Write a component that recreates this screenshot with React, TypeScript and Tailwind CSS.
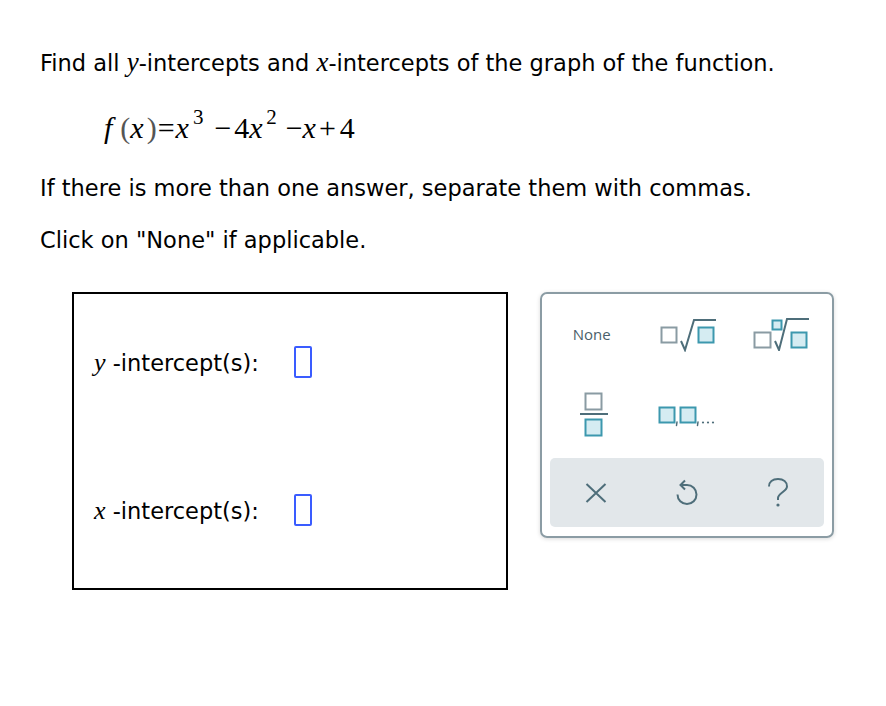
import React from "react";

const GRAY = "#8a9ba3";
const TEAL = "#3c98ae";
const TEAL_FILL = "#d5ecf2";
const INK = "#4e6e7a";

function SqrtIcon() {
  return (
    <svg width="58" height="34" viewBox="0 0 58 34">
      <rect x="1.5" y="9.5" width="15" height="15" fill="white" stroke={GRAY} strokeWidth="2" />
      <path d="M21 23 L25 32 L34 2 L56 2" fill="none" stroke={INK} strokeWidth="2" />
      <rect x="38.5" y="9.5" width="15" height="15" fill={TEAL_FILL} stroke={TEAL} strokeWidth="2" />
    </svg>
  );
}

function NthRootIcon() {
  return (
    <svg width="58" height="34" viewBox="0 0 58 34">
      <rect x="1.5" y="15.5" width="16" height="15" fill="white" stroke={GRAY} strokeWidth="2" />
      <rect x="19.5" y="3.5" width="9" height="9" fill={TEAL_FILL} stroke={TEAL} strokeWidth="2" />
      <path d="M22 24 L26 33 L34 2 L56 2" fill="none" stroke={INK} strokeWidth="2" />
      <rect x="38.5" y="15.5" width="15" height="15" fill={TEAL_FILL} stroke={TEAL} strokeWidth="2" />
    </svg>
  );
}

function FractionIcon() {
  return (
    <svg width="30" height="47" viewBox="0 0 30 47">
      <rect x="6.5" y="2.5" width="16" height="16" fill="white" stroke={GRAY} strokeWidth="2" />
      <path d="M1 23 L29 23" stroke={INK} strokeWidth="2" />
      <rect x="6.5" y="28.5" width="16" height="16" fill={TEAL_FILL} stroke={TEAL} strokeWidth="2" />
    </svg>
  );
}

function ListIcon() {
  return (
    <svg width="60" height="24" viewBox="0 0 60 24">
      <rect x="1.5" y="3.5" width="15" height="15" fill={TEAL_FILL} stroke={TEAL} strokeWidth="2" />
      <path d="M19 18 L18.5 21.5" stroke={INK} strokeWidth="1.5" strokeLinecap="round" />
      <rect x="22.5" y="3.5" width="15" height="15" fill={TEAL_FILL} stroke={TEAL} strokeWidth="2" />
      <path d="M40 18 L39.5 21.5" stroke={INK} strokeWidth="1.5" strokeLinecap="round" />
      <circle cx="45" cy="18.5" r="1.1" fill={INK} />
      <circle cx="50" cy="18.5" r="1.1" fill={INK} />
      <circle cx="55" cy="18.5" r="1.1" fill={INK} />
    </svg>
  );
}

function CloseIcon() {
  return (
    <svg width="22" height="20" viewBox="0 0 22 20">
      <path d="M1.5 1 L20.5 19 M20.5 1 L1.5 19" stroke={INK} strokeWidth="2" />
    </svg>
  );
}

function UndoIcon() {
  return (
    <svg width="24" height="28" viewBox="0 0 24 28">
      <path d="M7 6 L12 6 A9.5 9.5 0 1 1 2.5 15.5" fill="none" stroke={INK} strokeWidth="2" />
      <path d="M10 1.5 L5.5 6 L10 10.5" fill="none" stroke={INK} strokeWidth="2" />
    </svg>
  );
}

function HelpIcon() {
  return (
    <svg width="22" height="30" viewBox="0 0 22 30">
      <path
        d="M2 8.5 C2 4 5.5 1 11 1 C16.5 1 20 4 20 8.5 C20 13.5 11 15 11 20 L11 22"
        fill="none"
        stroke={INK}
        strokeWidth="2"
      />
      <circle cx="11" cy="27" r="1.6" fill={INK} />
    </svg>
  );
}

function AnswerBox() {
  return <span className="inline-block h-[32px] w-[18px] rounded-[2px] border-2 border-[#3a5cff]" />;
}

export default function App() {
  const sans = { fontFamily: '"DejaVu Sans", Verdana, sans-serif' };
  const serif = { fontFamily: '"Liberation Serif", "Times New Roman", serif' };

  return (
    <div className="h-[706px] w-[886px] bg-white pl-[40px] pt-[48px] text-black" style={sans}>
      <p className="text-[22.5px] leading-[28px]">
        Find all <i style={serif} className="text-[27px]">y</i>-intercepts and{" "}
        <i style={serif} className="text-[27px]">x</i>-intercepts of the graph of the function.
      </p>

      {/* f(x) = x^3 - 4x^2 - x + 4 */}
      <div className="ml-[64px] mt-[34px] flex h-[34px] items-baseline text-[30px] leading-[34px]" style={serif}>
        <i>f</i>
        <span className="ml-[8px] text-[#555]">(</span>
        <i>x</i>
        <span className="ml-[3px] text-[#555]">)</span>
        <span className="ml-[1px]">=</span>
        <i className="ml-[1px]">x</i>
        <span className="relative -top-[14px] ml-[4px] text-[21px]">3</span>
        <span className="ml-[11px]">−</span>
        <span className="ml-[3px]">4</span>
        <i>x</i>
        <span className="relative -top-[14px] ml-[3.5px] text-[21px]">2</span>
        <span className="ml-[9px]">−</span>
        <i>x</i>
        <span className="ml-[3px]">+</span>
        <span className="ml-[4px]">4</span>
      </div>

      <p className="mt-[29px] text-[22.5px] leading-[28px]">
        If there is more than one answer, separate them with commas.
      </p>
      <p className="mt-[24px] text-[22.5px] leading-[28px]">Click on "None" if applicable.</p>

      <div className="ml-[32px] mt-[38px] flex items-start gap-[32px]">
        <div className="flex h-[298px] w-[436px] flex-col border-2 border-black pl-[20px] pt-[52px]">
          <div className="flex h-[32px] items-center">
            <span className="w-[200px] text-[22.5px]">
              <i style={serif} className="text-[26px]">y</i> -intercept(s):
            </span>
            <AnswerBox />
          </div>
          <div className="mt-[116px] flex h-[32px] items-center">
            <span className="w-[200px] text-[22.5px]">
              <i style={serif} className="text-[26px]">x</i> -intercept(s):
            </span>
            <AnswerBox />
          </div>
        </div>

        <div className="flex h-[246px] w-[294px] flex-col rounded-[7px] border-2 border-[#8b9ca4] px-[8px] pb-[8px] shadow-[0_1px_4px_rgba(0,0,0,0.15)]">
          <div className="grid grid-cols-3">
            <div className="flex h-[80px] items-center justify-center pr-[8px]">
              <span className="text-[15px] text-[#4a5f6a]" style={{ fontFamily: '"Open Sans", sans-serif' }}>
                None
              </span>
            </div>
            <div className="flex h-[80px] items-center justify-center pl-[4px] pt-[2px]">
              <SqrtIcon />
            </div>
            <div className="flex h-[80px] items-center justify-center pl-[8px]">
              <NthRootIcon />
            </div>
            <div className="flex h-[80px] items-center justify-center pr-[4px]">
              <FractionIcon />
            </div>
            <div className="flex h-[80px] items-center justify-center pl-[2px] pt-[4px]">
              <ListIcon />
            </div>
            <div className="h-[80px]" />
          </div>
          <div className="mt-[4px] grid h-[69px] grid-cols-3 items-center rounded-[5px] bg-[#e2e7ea]">
            <div className="flex justify-center">
              <CloseIcon />
            </div>
            <div className="flex justify-center">
              <UndoIcon />
            </div>
            <div className="flex justify-center">
              <HelpIcon />
            </div>
          </div>
        </div>
      </div>
    </div>
  );
}
